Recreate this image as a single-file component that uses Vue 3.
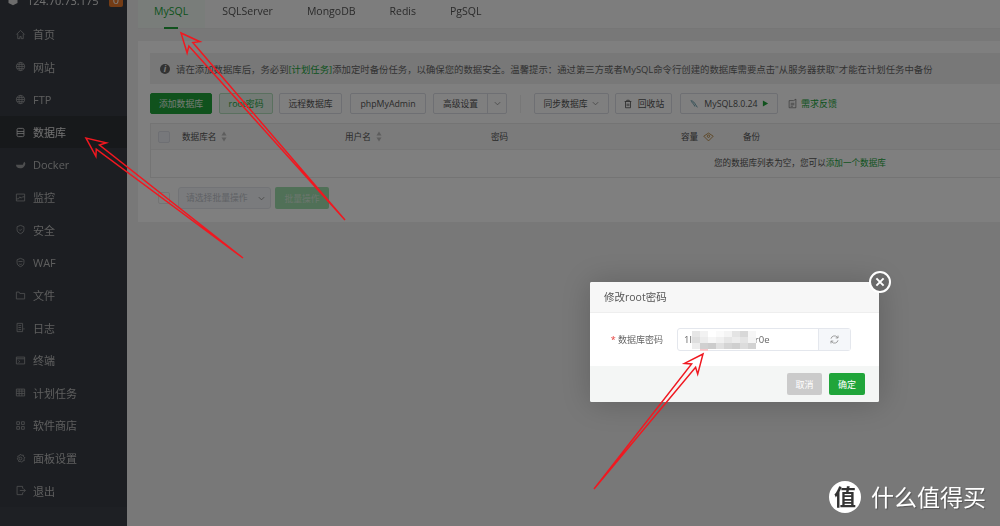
<script setup>
const menus = [
  { name: "首页", icon: "home" },
  { name: "网站", icon: "globe" },
  { name: "FTP", icon: "globe" },
  { name: "数据库", icon: "db", active: true },
  { name: "Docker", icon: "docker" },
  { name: "监控", icon: "monitor" },
  { name: "安全", icon: "shield" },
  { name: "WAF", icon: "waf" },
  { name: "文件", icon: "folder" },
  { name: "日志", icon: "log" },
  { name: "终端", icon: "term" },
  { name: "计划任务", icon: "cal" },
  { name: "软件商店", icon: "grid" },
  { name: "面板设置", icon: "gear" },
  { name: "退出", icon: "exit" },
];

const iconPaths = {
  home: "M2 8 8 2l6 6M4 7v7h3v-3h2v3h3V7",
  globe: "M8 2a6 6 0 1 0 0 12A6 6 0 0 0 8 2M2 8h12M3 5h10M3 11h10M8 2c-3 3-3 9 0 12M8 2c3 3 3 9 0 12",
  db: "M3 3.500C3 2.500 4 2 5 2h6c1 0 2 .5 2 1.500v9c0 1-1 1.500-2 1.500H5c-1 0-2-.5-2-1.500zM3 6.500h10M3 9.500h10",
  monitor: "M2 3h12v10H2zM2 10h3l2-3 2 2 2-2h3",
  shield: "M8 2l5 2v4c0 3-2 5-5 6-3-1-5-3-5-6V4zM6 8l1.500 1.500L10 7",
  waf: "M8 2l5 2v4c0 3-2 5-5 6-3-1-5-3-5-6V4zM5 6.500h6M6 10c1 1 3 1 4 0",
  folder: "M2 3h4l1 2h7v8H2z",
  log: "M3 2h8v12H3zM5 5h4M5 8h4M5 11h4M13 9v2",
  term: "M2 3h12v10H2zM2 5.500h12M5 8l2 1.500-2 1.500",
  cal: "M2 3h12v10H2zM2 6h12M2 9.500h12M6 3v10M10 3v10",
  grid: "M2.500 2.500h4v4h-4zM9.500 2.500h4v4h-4zM2.500 9.500h4v4h-4zM9.500 9.500h4v4h-4z",
  gear: "M8 1.500l1.500 2 2.500-.5.500 2.500 2 1.500-1.500 1.500.5 2.500-2.500.5-1.500 2-1.500-1.500-2.500.5-.5-2.500-2-1.500 1.500-1.500-.5-2.500 2.500-.5zM8 6a2 2 0 1 0 0 4 2 2 0 0 0 0-4",
  exit: "M11 5V2H3v12h8v-3M7 8h8M12 5l3 3-3 3",
};

const dockerPath = "M1.500 8.500h10c.5-1.500 1-4 2.500-4.500 0 1 .5 1.500 1 2 0 4-3 7.500-7.500 7.500-4 0-6-2-6-5z";

const columns = [
  { label: "数据库名", sort: true, cls: "c-name" },
  { label: "用户名", sort: true, cls: "c-user" },
  { label: "密码", cls: "c-pass" },
  { label: "容量", eye: true, cls: "c-size" },
  { label: "备份", cls: "c-backup" },
];

// mosaic over the password, [column, row, grey]
const mosaic = [
  [0, 0, "#e6e6e6"], [1, 0, "#f2f2f2"], [2, 0, "#fff"], [3, 0, "#fafafa"], [4, 0, "#f4f4f4"], [5, 0, "#e4e4e4"], [6, 0, "#d8d8d8"], [7, 0, "#f6f6f6"],
  [0, 1, "#dedede"], [1, 1, "#ececec"], [2, 1, "#f6f6f6"], [3, 1, "#f0f0f0"], [4, 1, "#e6e6e6"], [5, 1, "#ececec"], [6, 1, "#e4e4e4"], [7, 1, "#f4f4f4"],
  [0, 2, "#ececec"], [1, 2, "#d0d0d0"], [2, 2, "#cccccc"], [3, 2, "#e0e0e0"], [4, 2, "#d4d4d4"], [5, 2, "#cfcfcf"], [6, 2, "#dcdcdc"], [7, 2, "#d2d2d2"],
  [1, 3, "#f6c9cc"],
];

// hollow hand-drawn arrow, from tail to tip
const arrowPoints = (x1, y1, x2, y2) => {
  const len = Math.hypot(x2 - x1, y2 - y1);
  const ux = (x2 - x1) / len;
  const uy = (y2 - y1) / len;
  const at = (back, side) =>
    `${(x2 - ux * back - uy * side).toFixed(1)},${(y2 - uy * back + ux * side).toFixed(1)}`;
  return [
    `${x1},${y1}`,
    at(15, 2.6),
    at(19, 8.5),
    at(0, 0),
    at(19, -8.5),
    at(15, -2.6),
  ].join(" ");
};

const arrows = [
  arrowPoints(345, 220, 181, 33),
  arrowPoints(243, 258, 86, 138),
  arrowPoints(594, 489, 703, 354),
];
</script>

<template>
  <div class="screen">
    <aside class="sidebar soft-focus">
      <div class="side-head">
        <svg class="logo" viewBox="0 0 16 16"><path d="M8 1l6 3v8l-6 3-6-3V4z" fill="#d8d8d8" /></svg>
        <span class="ip">124.70.73.175</span>
        <span class="badge">0</span>
      </div>
      <div
        v-for="item in menus"
        :key="item.name"
        class="menu-item"
        :class="{ active: item.active }"
      >
        <svg v-if="item.icon === 'docker'" class="menu-icon filled" viewBox="0 0 16 16">
          <path :d="dockerPath" />
        </svg>
        <svg v-else class="menu-icon" viewBox="0 0 16 16">
          <path :d="iconPaths[item.icon]" />
        </svg>
        <span>{{ item.name }}</span>
      </div>
      <div class="side-rest"></div>
    </aside>

    <main class="main soft-focus">
      <nav class="tabs">
        <a class="tab on">MySQL<i class="tab-bar"></i></a>
        <a class="tab">SQLServer</a>
        <a class="tab">MongoDB</a>
        <a class="tab">Redis</a>
        <a class="tab">PgSQL</a>
      </nav>

      <section class="card">
        <div class="notice">
          <span class="notice-icon">i</span>
          <span>请在添加数据库后，务必到<b class="link">[计划任务]</b>添加定时备份任务，以确保您的数据安全。温馨提示：通过第三方或者MySQL命令行创建的数据库需要点击"从服务器获取"才能在计划任务中备份</span>
        </div>

        <div class="toolbar">
          <button class="btn primary w-add">添加数据库</button>
          <button class="btn soft w-root">root密码</button>
          <button class="btn w-remote">远程数据库</button>
          <button class="btn w-php">phpMyAdmin</button>
          <div class="btn split">
            <span class="split-main">高级设置</span>
            <span class="split-arrow"><svg class="chev" viewBox="0 0 10 10"><path d="M2 3.500l3 3 3-3" /></svg></span>
          </div>
          <i class="tool-sep"></i>
          <button class="btn w-sync">同步数据库<svg class="chev" viewBox="0 0 10 10"><path d="M2 3.500l3 3 3-3" /></svg></button>
          <button class="btn w-bin">
            <svg class="small-icon" viewBox="0 0 12 12"><path d="M2 3h8M3 3v7.500h6V3M4.500 3V1.500h3V3M5 5.500v3M7 5.500v3" /></svg>
            回收站
          </button>
          <button class="btn w-ver">
            <svg class="small-icon fish" viewBox="0 0 12 12"><path d="M2 2c3 0 5 3 6 5l2 3M3 3c1 2 3 3 4 6" /></svg>
            MySQL8.0.24
            <svg class="play" viewBox="0 0 8 8"><path d="M1 .5l6 3.500-6 3.500z" /></svg>
          </button>
          <span class="feedback">
            <svg class="note" viewBox="0 0 12 14"><path d="M1.500 2.500h6l3-2v11.500h-9zM3.500 6h5M3.500 8h5M3.500 10h3" /></svg>
            需求反馈
          </span>
        </div>

        <div class="table">
          <div class="thead">
            <i class="check"></i>
            <span v-for="col in columns" :key="col.label" :class="col.cls">
              {{ col.label }}
              <svg v-if="col.sort" class="sort" viewBox="0 0 6 11"><path d="M3 .5l2.500 4h-5zM3 10.500l2.500-4h-5z" /></svg>
              <svg v-if="col.eye" class="eye" viewBox="0 0 14 12"><path d="M1 5l6-4 6 4-6 6zM7 3.500a1.500 1.500 0 1 0 0 3 1.500 1.500 0 0 0 0-3" /></svg>
            </span>
          </div>
          <div class="tbody">您的数据库列表为空，您可以<span class="link">添加一个数据库</span></div>
        </div>

        <div class="batch">
          <i class="check"></i>
          <div class="batch-select">请选择批量操作<svg class="chev" viewBox="0 0 10 10"><path d="M2 3.500l3 3 3-3" /></svg></div>
          <button class="btn batch-btn">批量操作</button>
        </div>
      </section>
    </main>

    <div class="mask"></div>

    <div class="dialog soft-focus">
      <div class="dialog-close">
        <svg viewBox="0 0 20 20"><path d="M6 6l8 8M14 6l-8 8" /></svg>
      </div>
      <header class="dialog-head">修改root密码</header>
      <div class="dialog-body">
        <label class="dialog-label"><em>*</em> 数据库密码</label>
        <div class="input-group">
          <div class="input">
            1l<span class="pw-gap"></span>r0e
            <div class="mosaic">
              <i
                v-for="(m, i) in mosaic"
                :key="i"
                :style="{ gridColumn: m[0] + 1, gridRow: m[1] + 1, background: m[2] }"
              ></i>
            </div>
          </div>
          <div class="refresh">
            <svg viewBox="0 0 14 14"><path d="M2.500 6a4.600 4.600 0 0 1 8-2l1 1M11.500 8a4.600 4.600 0 0 1-8 2l-1-1M11.500 2v3h-3M2.500 12V9h3" /></svg>
          </div>
        </div>
      </div>
      <footer class="dialog-foot">
        <button class="dlg-btn cancel">取消</button>
        <button class="dlg-btn ok">确定</button>
      </footer>
    </div>

    <svg class="arrows soft-focus" viewBox="0 0 1000 526">
      <polygon v-for="(pts, i) in arrows" :key="i" :points="pts" />
    </svg>

    <div class="watermark">
      <span class="wm-logo">值</span>
      <span class="wm-text">什么值得买</span>
    </div>
  </div>
</template>

<style>
html,
body {
  margin: 0;
  overflow: hidden;
}
</style>

<style scoped>
.screen {
  position: relative;
  display: flex;
  width: 1000px;
  height: 526px;
  overflow: hidden;
  background: #f0f0f0;
  color: #666;
  font-family: "Open Sans", "Noto Sans CJK SC", sans-serif;
  font-size: 8.8px;
}

/* the reference is a slightly soft, rescaled capture */
.soft-focus {
  filter: blur(0.4px);
}

.sidebar {
  display: flex;
  flex-direction: column;
  flex: 0 0 127px;
  background: #383d45;
  color: #bdbdbd;
  font-size: 11px;
}

.side-head {
  display: flex;
  align-items: center;
  height: 36px;
  margin-top: -18px;
  flex: none;
  padding-left: 7px;
  color: #e0e0e0;
}

.logo {
  width: 12px;
  height: 14px;
  margin-right: 8px;
}

.badge {
  margin-left: auto;
  margin-right: 4px;
  width: 14px;
  height: 14px;
  border-radius: 2px;
  background: #e8792a;
  color: #fff;
  text-align: center;
  line-height: 14px;
}

.menu-item {
  display: flex;
  align-items: center;
  flex: none;
  height: 32.6px;
  padding-left: 15px;
  gap: 7px;
}

.menu-item.active {
  background: #2f3237;
  color: #e2e2e2;
}

.menu-icon {
  width: 11px;
  height: 11px;
  fill: none;
  stroke: currentColor;
  stroke-width: 1.2;
  opacity: 0.75;
}

.menu-icon.filled {
  fill: currentColor;
  stroke: none;
}

.active .menu-icon {
  opacity: 1;
}

.side-rest {
  flex: 1;
  background: #3c4149;
}

.main {
  flex: 1;
  min-width: 0;
  padding-left: 11px;
}

.tabs {
  display: flex;
  height: 29px;
  background: #fafafa;
  border-bottom: 1px solid #ededed;
  box-sizing: border-box;
  font-size: 10.5px;
  line-height: 23px;
}

.tab {
  position: relative;
  padding: 0 17px;
  color: #555;
}

.tab.on {
  padding-left: 16px;
  background: #f2fbf4;
  color: #20a53a;
}

.tab-bar {
  position: absolute;
  left: 26px;
  bottom: -1px;
  width: 14px;
  height: 2px;
  background: #20a53a;
}

.card {
  margin-top: 12px;
  height: 181px;
  padding: 12px 0 0 12px;
  box-sizing: border-box;
  background: #fff;
  white-space: nowrap;
  overflow: hidden;
}

.notice {
  display: flex;
  align-items: center;
  height: 31px;
  padding-left: 10px;
  background: #f1f1f1;
  font-size: 9.4px;
  color: #666;
}

.notice-icon {
  width: 10px;
  height: 10px;
  margin-right: 6px;
  border-radius: 50%;
  background: #666;
  color: #fff;
  text-align: center;
  line-height: 10px;
  font-size: 8px;
  font-weight: 700;
  font-style: italic;
}

.link {
  color: #20a53a;
  font-weight: 400;
}

.toolbar {
  display: flex;
  align-items: center;
  height: 21px;
  margin-top: 9px;
}

.btn {
  display: inline-flex;
  align-items: center;
  justify-content: center;
  flex: none;
  height: 21px;
  padding: 0;
  box-sizing: border-box;
  border: 1px solid #dcdfe6;
  border-radius: 2px;
  background: #fff;
  color: #555;
  font-family: inherit;
  font-size: 8.8px;
}

.primary {
  background: #20a53a;
  border-color: #20a53a;
  color: #e8f5ea;
}

.soft {
  background: #e9f6ec;
  border-color: #b5e0bf;
  color: #20a53a;
}

.w-add { width: 62px; }
.w-root { width: 54px; margin-left: 7px; }
.w-remote { width: 63px; margin-left: 6px; }
.w-php { width: 76px; margin-left: 8px; }
.split { width: 74px; margin-left: 7px; justify-content: flex-start; }
.split-main { width: 53px; text-align: center; }
.split-arrow {
  display: flex;
  justify-content: center;
  flex: 1;
  align-self: stretch;
  align-items: center;
  border-left: 1px solid #dcdfe6;
}
.tool-sep {
  width: 1px;
  height: 18px;
  margin: 0 13px;
  background: #eee;
}
.w-sync { width: 75px; gap: 3px; }
.w-bin { width: 57px; margin-left: 6px; gap: 5px; }
.w-ver { width: 98px; margin-left: 8px; gap: 4px; }

.chev {
  width: 9px;
  height: 9px;
  fill: none;
  stroke: #888;
  stroke-width: 0.9;
}

.small-icon {
  width: 10px;
  height: 10px;
  fill: none;
  stroke: #555;
  stroke-width: 1;
}

.fish {
  stroke: #4a8c9c;
  margin-right: 1px;
}

.play {
  width: 7px;
  height: 7px;
  fill: #20a53a;
}

.feedback {
  display: inline-flex;
  align-items: center;
  gap: 4px;
  margin-left: 10px;
  font-size: 9px;
  color: #20a53a;
}

.note {
  width: 9px;
  height: 12px;
  fill: none;
  stroke: #666;
  stroke-width: 0.9;
}

.table {
  margin-top: 9px;
  border: 1px solid #e8e8e8;
  border-right: 0;
  box-sizing: border-box;
  height: 55px;
  font-size: 8.6px;
}

.thead {
  position: relative;
  display: flex;
  align-items: center;
  height: 26px;
  box-sizing: border-box;
  border-bottom: 1px solid #ececec;
  background: #f6f6f6;
  color: #555;
}

.check {
  display: block;
  flex: none;
  width: 10px;
  height: 10px;
  border: 1px solid #dcdfe6;
  border-radius: 2px;
  background: #fff;
}

.thead .check {
  margin-left: 7px;
  background: #eef1f7;
}

.thead span {
  display: inline-flex;
  align-items: center;
  gap: 5px;
  flex: none;
}

.c-name { margin-left: 12px; width: 163px; }
.c-user { width: 146px; }
.c-pass { width: 190px; }
.c-size { width: 62px; }

.sort {
  width: 6px;
  height: 11px;
  fill: #bbb;
}

.eye {
  width: 11px;
  height: 10px;
  fill: none;
  stroke: #b07a2a;
  stroke-width: 1;
}

.tbody {
  height: 27px;
  padding-left: 563px;
  line-height: 27px;
  color: #555;
}

.batch {
  display: flex;
  align-items: center;
  height: 22px;
  margin-top: 9px;
  padding-left: 8px;
}

.batch .check {
  border-color: #e8e8e8;
}

.batch-select {
  display: flex;
  align-items: center;
  justify-content: space-between;
  width: 93px;
  height: 22px;
  margin-left: 8px;
  padding: 0 4px 0 7px;
  box-sizing: border-box;
  border: 1px solid #e4e7ed;
  border-radius: 3px;
  color: #c0c4cc;
  background: #f5f7fa;
  line-height: 20px;
}

.batch-btn {
  width: 54px;
  height: 22px;
  margin-left: 4px;
  border: 0;
  background: #a0e0ae;
  color: #d8ecdc;
}

.mask {
  position: absolute;
  inset: 0;
  background: rgba(0, 0, 0, 0.5);
}

.dialog {
  position: absolute;
  left: 590px;
  top: 282px;
  width: 289px;
  height: 120px;
  display: flex;
  flex-direction: column;
  background: #fff;
  border-radius: 2px;
  box-shadow: 1px 1px 30px rgba(0, 0, 0, 0.2);
  font-size: 9px;
  color: #666;
}

.dialog-close {
  position: absolute;
  right: -12px;
  top: -11px;
  width: 22px;
  height: 22px;
  box-sizing: border-box;
  border: 2px solid #fff;
  border-radius: 50%;
  background: #6a6a6a;
}

.dialog-close svg {
  display: block;
  width: 18px;
  height: 18px;
  fill: none;
  stroke: #fff;
  stroke-width: 2.2;
}

.dialog-head {
  height: 31px;
  flex: none;
  box-sizing: border-box;
  padding-left: 14px;
  background: #f7f7f7;
  border-bottom: 1px solid #eee;
  border-radius: 2px 2px 0 0;
  font-size: 10.5px;
  line-height: 30px;
  color: #555;
}

.dialog-body {
  display: flex;
  align-items: center;
  height: 53px;
  flex: none;
  box-sizing: border-box;
  padding: 0 28px 0 0;
}

.dialog-label {
  width: 73px;
  text-align: right;
  color: #666;
}

.dialog-label em {
  color: #e53935;
  font-style: normal;
}

.input-group {
  display: flex;
  height: 23px;
  margin-left: 14px;
  flex: 1;
  box-sizing: border-box;
  border: 1px solid #e4e7ed;
  border-radius: 3px;
}

.input {
  position: relative;
  flex: 1;
  padding-left: 6px;
  line-height: 21px;
  font-size: 9.5px;
  color: #666;
}

.pw-gap {
  display: inline-block;
  width: 63px;
}

.mosaic {
  position: absolute;
  left: 14px;
  top: 2px;
  display: grid;
  grid-template-columns: repeat(8, 8px);
  grid-template-rows: 6px 6px 6px 2px;
}

.refresh {
  display: flex;
  align-items: center;
  justify-content: center;
  width: 31px;
  background: #f5f7fa;
  border-left: 1px solid #e4e7ed;
}

.refresh svg {
  width: 11px;
  height: 11px;
  fill: none;
  stroke: #888;
  stroke-width: 1;
}

.dialog-foot {
  display: flex;
  justify-content: flex-end;
  align-items: center;
  flex: 1;
  gap: 7px;
  padding-right: 14px;
  background: #f4f6f5;
  border-radius: 0 0 2px 2px;
}

.dlg-btn {
  width: 35px;
  height: 22px;
  padding: 0;
  border: 0;
  border-radius: 2px;
  color: #fff;
  font-family: inherit;
  font-size: 9px;
}

.cancel {
  background: #cbcbcb;
}

.ok {
  width: 36px;
  background: #20a53a;
}

.arrows {
  position: absolute;
  inset: 0;
  width: 1000px;
  height: 526px;
  pointer-events: none;
}

.arrows polygon {
  fill: none;
  stroke: #f01820;
  stroke-width: 1.5;
  stroke-linejoin: miter;
}

.watermark {
  position: absolute;
  left: 829px;
  top: 481px;
  display: flex;
  align-items: center;
  gap: 10px;
  color: #fff;
}

.wm-logo {
  width: 32px;
  height: 32px;
  border-radius: 50%;
  background: #fff;
  color: #333;
  text-align: center;
  font-size: 22px;
  line-height: 31px;
  font-weight: 700;
}

.wm-text {
  font-size: 23px;
  line-height: 32px;
  text-shadow: 1px 1px 1px rgba(0, 0, 0, 0.3);
}
</style>
